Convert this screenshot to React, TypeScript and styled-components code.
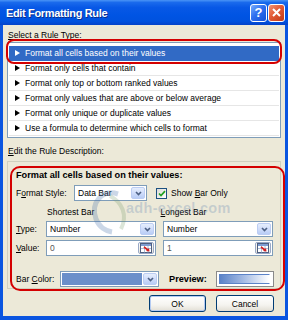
import React from "react";
import styled, { createGlobalStyle } from "styled-components";

const GlobalStyle = createGlobalStyle`
  html, body {
    margin: 0;
    padding: 0;
  }
  body {
    width: 288px;
    height: 320px;
    overflow: hidden;
    font-family: "Liberation Sans", Arial, sans-serif;
  }
`;

const Window = styled.div`
  width: 288px;
  height: 320px;
  display: flex;
  flex-direction: column;
  background: #0a55e0;
`;

const TitleBar = styled.div`
  height: 25px;
  flex-shrink: 0;
  display: flex;
  align-items: center;
  padding: 0 3px 0 6px;
  background: linear-gradient(180deg, #4a94f6 0%, #1a6aec 10%, #0858e6 30%, #0054e3 60%, #0052df 85%, #0443c9 100%);
`;

const Title = styled.div`
  flex: 1;
  color: #fff;
  font-size: 11px;
  font-weight: bold;
  letter-spacing: -0.35px;
  text-shadow: 1px 1px 0 #0b2f8f;
`;

const CaptionButton = styled.div<{ $tone: "help" | "close" }>`
  width: 17px;
  height: 18px;
  box-sizing: border-box;
  border: 1px solid #fff;
  border-radius: 3px;
  display: flex;
  align-items: center;
  justify-content: center;
  color: #fff;
  font-size: 13px;
  font-weight: bold;
  background: ${(p) =>
    p.$tone === "close"
      ? "linear-gradient(135deg, #f29374 0%, #e25b37 45%, #c03a16 100%)"
      : "linear-gradient(135deg, #7aaefc 0%, #2f70f0 45%, #1450d6 100%)"};
  & + & {
    margin-left: 1px;
  }
`;

const Frame = styled.div`
  flex: 1;
  display: flex;
  flex-direction: column;
  margin: 0 3px 4px;
  padding: 5px 4px 0;
  background: #ece9d8;
  color: #000;
  font-size: 8.5px;
`;

const Caption = styled.div<{ $gap?: number }>`
  line-height: 10px;
  padding-left: 1px;
  margin-top: ${(p) => p.$gap ?? 0}px;
`;

const ListBox = styled.div`
  position: relative;
  margin-top: 2px;
  border: 1px solid #7f9db9;
  background: #fff;
  padding: 3px 1px 1px;
`;

const Row = styled.div<{ $selected?: boolean }>`
  height: 15px;
  box-sizing: border-box;
  display: flex;
  align-items: center;
  gap: 5px;
  padding-left: 6px;
  color: ${(p) => (p.$selected ? "#fff" : "#000")};
  background: ${(p) => (p.$selected ? "#316ac5" : "transparent")};
  border-bottom: 1px solid ${(p) => (p.$selected ? "#316ac5" : "#e6e6e6")};
  &:last-child {
    border-bottom-color: transparent;
  }
`;

const Arrow = styled.span`
  width: 0;
  height: 0;
  border-top: 3px solid transparent;
  border-bottom: 3px solid transparent;
  border-left: 5px solid currentColor;
`;

const Ring = styled.div`
  position: absolute;
  box-sizing: border-box;
  border: 2px solid #d40000;
  pointer-events: none;
`;

const ListRing = styled(Ring)`
  left: -2px;
  top: -4px;
  width: 276px;
  height: 25px;
  border-radius: 8px;
`;

const GroupRing = styled(Ring)`
  left: 2px;
  top: 4px;
  width: 275px;
  height: 125px;
  border-radius: 10px;
`;

const Group = styled.div`
  position: relative;
  margin-top: 5px;
  border: 1px solid #d0d0bf;
  padding: 8px 6px 1px 8px;
`;

const Heading = styled.div`
  font-size: 9.2px;
  font-weight: bold;
  line-height: 10px;
`;

const FieldRow = styled.div<{ $gap: number }>`
  display: flex;
  align-items: center;
  height: 16px;
  margin-top: ${(p) => p.$gap}px;
`;

const FieldLabel = styled.span<{ $width: number }>`
  width: ${(p) => p.$width}px;
  flex-shrink: 0;
`;

const ColumnHeads = styled.div`
  display: flex;
  height: 10px;
  line-height: 10px;
  margin-top: 6px;
  padding-left: 31px;
`;

const ColumnHead = styled.span`
  width: 116px;
`;

const Box = styled.div<{ $width: number }>`
  width: ${(p) => p.$width}px;
  height: 16px;
  box-sizing: border-box;
  border: 1px solid #7f9db9;
  background: #fff;
  display: flex;
  align-items: center;
  padding: 1px;
  flex-shrink: 0;
`;

const BoxText = styled.span<{ $muted?: boolean }>`
  flex: 1;
  padding-left: 2px;
  color: ${(p) => (p.$muted ? "#555" : "#000")};
`;

const Swatch = styled.span`
  flex: 1;
  height: 100%;
  margin-right: 1px;
  background: #6b8fca;
`;

const DropButton = styled.span`
  width: 14px;
  height: 100%;
  box-sizing: border-box;
  border: 1px solid #bccdf3;
  border-radius: 2px;
  background: linear-gradient(180deg, #e6eefd 0%, #d0ddfa 50%, #b9cdf6 100%);
  display: flex;
  align-items: center;
  justify-content: center;
`;

const RefButton = styled.span`
  width: 16px;
  height: 100%;
  box-sizing: border-box;
  border: 1px solid #9aa9c6;
  border-radius: 2px;
  background: linear-gradient(180deg, #fdfdfb 0%, #e8e6dc 100%);
  display: flex;
  align-items: center;
  justify-content: center;
`;

const Spacer = styled.span<{ $width: number }>`
  width: ${(p) => p.$width}px;
  flex-shrink: 0;
`;

const CheckBox = styled.span`
  width: 11px;
  height: 11px;
  box-sizing: border-box;
  border: 1px solid #1c5180;
  background: linear-gradient(135deg, #dcdcd7 0%, #fff 100%);
  display: flex;
  align-items: center;
  justify-content: center;
  margin-right: 4px;
`;

const BoldLabel = styled.span`
  width: 47px;
  flex-shrink: 0;
  font-weight: bold;
  font-size: 9.2px;
`;

const PreviewBox = styled.div`
  width: 58px;
  height: 16px;
  box-sizing: border-box;
  border: 1px solid #8a8a8a;
  background: #fff;
  padding: 2px 3px 2px 2px;
`;

const PreviewBar = styled.div`
  height: 100%;
  box-sizing: border-box;
  border: 1px solid #5b83c8;
  border-right-color: #fff;
  background: linear-gradient(90deg, #5b83c8 0%, #9fb7e2 45%, #fff 100%);
`;

const Watermark = styled.div`
  position: absolute;
  left: 80px;
  top: 25px;
  display: flex;
  align-items: center;
  pointer-events: none;
`;

const WatermarkText = styled.span`
  margin-left: -8px;
  margin-top: -8px;
  font-size: 14.5px;
  font-weight: bold;
  color: rgba(96, 130, 176, 0.28);
  letter-spacing: 0.3px;
`;

const Buttons = styled.div`
  display: flex;
  justify-content: flex-end;
  gap: 10px;
  margin-top: 6px;
  padding-right: 7px;
`;

const DialogButton = styled.div<{ $width: number; $default?: boolean }>`
  width: ${(p) => p.$width}px;
  height: 17px;
  box-sizing: border-box;
  border: 1px solid #003c74;
  border-radius: 3px;
  background: linear-gradient(180deg, #fff 0%, #f5f4ef 60%, #e2dfd4 100%);
  box-shadow: ${(p) => (p.$default ? "inset 0 0 0 1px #b4cbf2" : "none")};
  display: flex;
  align-items: center;
  justify-content: center;
`;

const Chevron = () => (
  <svg width="7" height="5" viewBox="0 0 7 5">
    <path d="M1 1 L3.5 3.6 L6 1" stroke="#4d6185" strokeWidth="1.6" fill="none" />
  </svg>
);

const RefIcon = () => (
  <svg width="12" height="10" viewBox="0 0 12 10">
    <rect x="0.5" y="0.5" width="11" height="9" fill="#fff" stroke="#4f5f80" />
    <rect x="1" y="1" width="10" height="2" fill="#7e9dd2" />
    <path d="M1 5.5 H11 M4.5 3 V9.5 M8 3 V9.5" stroke="#9aaed0" strokeWidth="0.8" />
    <path d="M4 4 L8.5 7.5" stroke="#d42020" strokeWidth="1.6" />
    <path d="M9.5 8.5 L6 8 L9 5 Z" fill="#d42020" />
  </svg>
);

const rules = [
  "Format all cells based on their values",
  "Format only cells that contain",
  "Format only top or bottom ranked values",
  "Format only values that are above or below average",
  "Format only unique or duplicate values",
  "Use a formula to determine which cells to format",
];

export default function App() {
  return (
    <>
      <GlobalStyle />
      <Window>
        <TitleBar>
          <Title>Edit Formatting Rule</Title>
          <CaptionButton $tone="help">?</CaptionButton>
          <CaptionButton $tone="close">
            <svg width="9" height="9" viewBox="0 0 9 9">
              <path d="M1 1 L8 8 M8 1 L1 8" stroke="#fff" strokeWidth="2" />
            </svg>
          </CaptionButton>
        </TitleBar>
        <Frame>
          <Caption>
            <u>S</u>elect a Rule Type:
          </Caption>
          <ListBox>
            {rules.map((r, i) => (
              <Row key={r} $selected={i === 0}>
                <Arrow />
                {r}
              </Row>
            ))}
            <ListRing />
          </ListBox>
          <Caption $gap={8}>
            <u>E</u>dit the Rule Description:
          </Caption>
          <Group>
            <Heading>Format all cells based on their values:</Heading>
            <FieldRow $gap={5}>
              <FieldLabel $width={58}>
                F<u>o</u>rmat Style:
              </FieldLabel>
              <Box $width={73}>
                <BoxText>Data Bar</BoxText>
                <DropButton>
                  <Chevron />
                </DropButton>
              </Box>
              <Spacer $width={9} />
              <CheckBox>
                <svg width="8" height="7" viewBox="0 0 8 7">
                  <path d="M1 3.5 L3 5.5 L7 1.2" stroke="#21a121" strokeWidth="1.7" fill="none" />
                </svg>
              </CheckBox>
              <span>
                Show <u>B</u>ar Only
              </span>
            </FieldRow>
            <ColumnHeads>
              <ColumnHead>Shortest Bar</ColumnHead>
              <ColumnHead>
                <u>L</u>ongest Bar
              </ColumnHead>
            </ColumnHeads>
            <FieldRow $gap={4}>
              <FieldLabel $width={30}>
                <u>T</u>ype:
              </FieldLabel>
              <Box $width={110}>
                <BoxText>Number</BoxText>
                <DropButton>
                  <Chevron />
                </DropButton>
              </Box>
              <Spacer $width={7} />
              <Box $width={110}>
                <BoxText>Number</BoxText>
                <DropButton>
                  <Chevron />
                </DropButton>
              </Box>
            </FieldRow>
            <FieldRow $gap={3}>
              <FieldLabel $width={30}>
                <u>V</u>alue:
              </FieldLabel>
              <Box $width={110}>
                <BoxText $muted>0</BoxText>
                <RefButton>
                  <RefIcon />
                </RefButton>
              </Box>
              <Spacer $width={7} />
              <Box $width={110}>
                <BoxText $muted>1</BoxText>
                <RefButton>
                  <RefIcon />
                </RefButton>
              </Box>
            </FieldRow>
            <FieldRow $gap={15}>
              <FieldLabel $width={44}>
                Bar <u>C</u>olor:
              </FieldLabel>
              <Box $width={99}>
                <Swatch />
                <DropButton>
                  <Chevron />
                </DropButton>
              </Box>
              <Spacer $width={10} />
              <BoldLabel>Preview:</BoldLabel>
              <PreviewBox>
                <PreviewBar />
              </PreviewBox>
            </FieldRow>
            <Watermark>
              <svg width="46" height="50" viewBox="0 0 46 50">
                <path d="M30 7 C14 2 2 16 8 32 C11 40 18 44 24 45" stroke="rgba(70,110,170,0.28)" strokeWidth="5" fill="none" />
                <path d="M22 9 C34 15 40 28 33 42" stroke="rgba(110,150,100,0.25)" strokeWidth="4" fill="none" />
              </svg>
              <WatermarkText>adh-excel.com</WatermarkText>
            </Watermark>
            <GroupRing />
          </Group>
          <Buttons>
            <DialogButton $width={57} $default>
              OK
            </DialogButton>
            <DialogButton $width={58}>Cancel</DialogButton>
          </Buttons>
        </Frame>
      </Window>
    </>
  );
}
